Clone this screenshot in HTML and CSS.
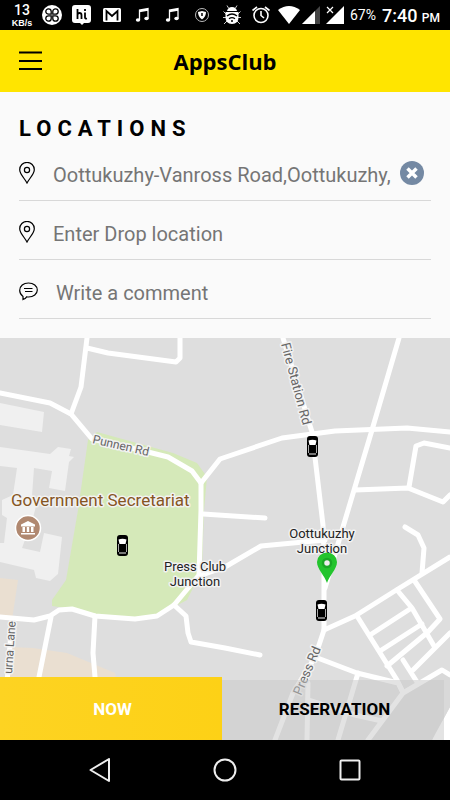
FILE: index.html
```html
<!DOCTYPE html>
<html lang="en">
  <head>
    <meta charset="utf-8" />
    <meta name="viewport" content="width=device-width, initial-scale=1.0" />
    <title>AppsClub</title>
    <link rel="stylesheet" href="styles.css">
  </head>
  <body>
    <!-- Status bar -->
    <div class="status">
      <div class="status-group notices">
        <div class="speed"><span class="speed-value">13</span><span class="speed-unit">KB/s</span></div>
        <svg class="ico" viewBox="0 0 20 20">
          <circle cx="10" cy="10" r="10" fill="#fff"/>
          <path d="M9.200 9.200H6.500a2.700 2.700 0 1 1 2.700-2.700zM10.800 9.200V6.500a2.700 2.700 0 1 1 2.700 2.700zM9.200 10.800v2.700a2.700 2.700 0 1 1-2.700-2.700zM10.800 10.800h2.700a2.700 2.700 0 1 1-2.700 2.700z" fill="#fff" stroke="#000" stroke-width="1.300"/>
        </svg>
        <svg class="ico" viewBox="0 0 20 20">
          <path d="M3 0h13q3 0 3 3v12q0 3-3 3h-4l-2 2-2-2H3q-3 0-3-3V3q0-3 3-3z" fill="#fff"/>
          <path d="M5.500 4v10M5.500 10q0-2 2-2t2 2v4M13 7.500v5q0 1.500 2 1M13 4v2" fill="none" stroke="#000" stroke-width="1.800"/>
        </svg>
        <svg class="ico" viewBox="0 0 20 20">
          <rect x="1" y="3" width="18" height="14" rx="1.500" fill="#fff"/>
          <path d="M4.500 15.500V6L10 11l5.500-5v9.500" fill="none" stroke="#000" stroke-width="1.800"/>
        </svg>
        <svg class="ico" viewBox="0 0 20 20"><use href="#note"/></svg>
        <svg class="ico" viewBox="0 0 20 20"><use href="#note"/></svg>
        <svg class="ico" viewBox="0 0 20 20">
          <circle cx="10" cy="10" r="6.500" fill="none" stroke="#bbb"/>
          <path d="M10 6l4 1q0 5-4 7.500Q6 12 6 7z" fill="#fff"/>
          <path d="M10 8v3" stroke="#000" stroke-width="1.500"/>
        </svg>
        <svg class="ico" viewBox="0 0 20 20">
          <path d="M5 6Q6 2 10 2t5 4z" fill="#fff"/>
          <path d="M6.500 3L5 .5M13.500 3L15 .5M4 9L1.500 6.500M4 12.500H1M5 16l-3 3M16 9l2.500-2.500M16 12.500h3M15 16l3 3" stroke="#ccc"/>
          <path d="M3.500 7h13v5q0 7-6.500 7t-6.500-7z" fill="#fff"/>
          <path d="M5 11q5-4 10 0M7 13.800q3-2.300 6 0" fill="none" stroke="#000" stroke-width="1.300"/>
          <circle cx="10" cy="16" r="1" />
        </svg>
      </div>
      <div class="status-group signals">
        <svg class="ico ico-cell" viewBox="1 1 18 20">
          <g fill="none" stroke="#fff" stroke-width="1.600">
            <circle cx="10" cy="11.500" r="7"/>
            <path d="M10 7v4.500l3 2.500M1.500 6.500L6 3M18.500 6.500L14 3"/>
          </g>
        </svg>
        <svg class="ico ico-wifi" viewBox="0 0 22 20"><path d="M0 5Q11-3 22 5L11 19z" fill="#fff"/></svg>
        <svg class="ico ico-cell" viewBox="0 0 18 20"><path d="M0 19L18 1v18z" fill="#444"/><path d="M0 19L13 6v13z" fill="#fff"/></svg>
        <svg class="ico ico-cell" viewBox="0 0 18 20"><path d="M0 19L18 1v18z" fill="#fff"/><path d="M1 2l6 6M7 2L1 8" stroke="#fff" stroke-width="1.200"/></svg>
        <span class="battery">67%</span>
        <span class="clock">7:40 <small>PM</small></span>
      </div>
    </div>

    <header class="topbar">
      <button class="menu" type="button" aria-label="Menu">
        <svg width="24" height="20" viewBox="0 0 24 20"><path d="M0 1.500h23M0 10h23M0 18h23" stroke="#000" stroke-width="1.800"/></svg>
      </button>
      <h1>AppsClub</h1>
    </header>

    <form class="locations">
      <h2>LOCATIONS</h2>
      <div class="field">
        <label for="pickup" aria-label="Pickup location"><svg width="16" height="22" viewBox="0 0 16 22"><use href="#pin"/></svg></label>
        <input id="pickup" type="text" value="Oottukuzhy-Vanross Road,Oottukuzhy," />
        <button class="clear" type="button" aria-label="Clear">
          <svg width="24" height="24" viewBox="0 0 24 24"><circle cx="12" cy="12" r="12" fill="#7489a3"/><path d="M7.500 7.500l9 9M16.500 7.500l-9 9" stroke="#fff" stroke-width="3.500"/></svg>
        </button>
      </div>
      <div class="field">
        <label for="drop" aria-label="Drop location"><svg width="16" height="22" viewBox="0 0 16 22"><use href="#pin"/></svg></label>
        <input id="drop" type="text" placeholder="Enter Drop location" />
      </div>
      <div class="field">
        <label for="comment" aria-label="Comment">
          <svg width="19" height="20" viewBox="0 0 19 20">
            <path d="M4 18.500V15.500Q.7 13 .7 9.500C.7 5 4.500 2 9.500 2s8.800 3 8.800 7-3.800 7-8.800 7q-1 0-1.800-.2Q6.500 17.500 4 18.500z" fill="none" stroke="#000" stroke-width="1.200"/>
            <path d="M5 7.500h8.500M6 10.500h7.500" stroke="#000"/>
          </svg>
        </label>
        <input id="comment" type="text" placeholder="Write a comment" />
      </div>
    </form>

    <main class="map">
      <svg class="map-canvas" viewBox="0 0 450 402" preserveAspectRatio="xMidYMin slice">
        <defs>
          <g id="note">
            <path d="M7.500 15V5l8.500-1.500v10M7.500 6.500L16 5" fill="none" stroke="#fff" stroke-width="1.300"/>
            <ellipse cx="6" cy="15" rx="2.200" ry="1.800" fill="#fff"/>
            <ellipse cx="14.500" cy="13.500" rx="2.200" ry="1.800" fill="#fff"/>
          </g>
          <g id="pin" fill="none" stroke="#000" stroke-width="1.200">
            <path d="M8 21C6 17 .7 12 .7 7.700a7.300 7.300 0 0 1 14.600 0C15.300 12 10 17 8 21z"/>
            <circle cx="8" cy="8" r="2.600"/>
          </g>
          <g id="car">
            <rect width="11" height="21" rx="3"/>
            <path d="M1.500 4.500q4-1.500 8 0L8.500 9h-6z" fill="#fff"/>
            <path d="M1.500 9v8M9.500 9v8" stroke="#aaa"/>
            <path d="M2 18h7" fill="none" stroke="#eee"/>
          </g>
        </defs>

        <rect width="450" height="402" fill="#dedede"/>
        <!-- campus, park and buildings -->
        <path d="M0 240l18 2-6 40-12-3zM10 309l23 1 34 5 48 20 20 67H0z" fill="#eadfd1"/>
        <path d="M97 94l76 21 24 10 10 14-3 33-2 60-15 30-30 16-22 3-40-3-23-7-20-3v-6l14-20 12-70 10-70z" fill="#d5e9b9"/>
        <path d="M0 65L44 74 42 94 0 87zM0 109L50 116 58 109 71 111 69 118 74 119 69 124 65 153 49 150 52 133 34 130 32 158 36 168 33 180 22 210 40 214 44 195 62 199 58 236 50 243 36 240 34 232 0 224V205H4L7 180 2 177V162L13 157 17 130 0 128z" fill="#f0f0f0"/>
        <path d="M450 369l-6 11-7 10-5 12h18z" fill="#fff"/>
        <path d="M442 332l-39 23-35 47h64l18-33v-32z" fill="#d9d9d9"/>

        <g class="roads">
          <path d="M0 55L50 65 71 76 92 101 148 114 168 119 192 133 201 145V172L199 237 174 267 157 278 135 281 95 278 72 271 59 272 50 278 34 282 0 279"/>
          <path d="M87 0L81 49 71 76M87 10l21 5 68 9 4-4V0"/>
          <path d="M201 145l19-24 62-21 53-7 72-3 43 4"/>
          <path d="M283 0l29 94 11 93 1 28v77l-9 27-22 36-18 47"/>
          <path d="M399 0L372 92 343 189 325 250M355 152l53-2 35 14 7-7"/>
          <path d="M409 149l7-41 8-3 26 5M203 176l62 4"/>
          <path d="M199 238l26-9 36-21 64-6M405 189l13 8 6 13-2 25"/>
          <path d="M324 292l31-14 43-27 52-32"/>
          <path d="M357 278l40 64 6 12M397 252l15 18 22 38M414 242l26 39-12 13-41 34M370 297l40-26M380 313l42-27M450 295l-37 37M403 322l14 22"/>
          <path d="M315 319l42 16 41 10 5 10-35 47M403 355l39-23 8 5M358 335l-20 67M308 345l-1 57M308 362l47 15 27 6" />
          <path d="M51 279l-12 60M95 278l-2 37 2 24M174 267l12 11 2 17 3 9 34 6 35 7M12 282L7 345"/>
        </g>

        <g class="labels">
          <text class="road short" transform="translate(92 105) rotate(13)">Punnen Rd</text>
          <text class="road" transform="translate(281 6) rotate(75)">Fire Station Rd</text>
          <text class="road" transform="translate(301 358) rotate(-67)">Press Rd</text>
          <text class="road short" transform="translate(12 336) rotate(-86)">urna Lane</text>
          <text class="poi" x="11" y="168">Government Secretariat</text>
          <text x="195" y="233" text-anchor="middle">Press Club</text>
          <text x="195" y="248" text-anchor="middle">Junction</text>
          <text x="322" y="200" text-anchor="middle">Oottukuzhy</text>
          <text x="322" y="215" text-anchor="middle">Junction</text>
        </g>

        <g transform="translate(28 190)">
          <circle r="12.500" fill="#b08870" stroke="#fff" stroke-width="1.500"/>
          <path d="M0-7l7 3.500v2H-7v-2zM-5.500-1h2.500v5h-2.500zM-1.200-1h2.400v5h-2.400zM3-1h2.500v5H3zM-7 5H7v1.500H-7z" fill="#fff"/>
        </g>

        <use href="#car" x="307" y="98"/>
        <use href="#car" x="117" y="197"/>
        <use href="#car" x="316" y="262"/>
        <path d="M327 245c-2-7-10-14-10-21a10 9.500 0 0 1 20 0c0 7-8 14-10 21z" fill="#23c42d"/>
        <circle cx="327" cy="225" r="4" fill="#eee" stroke="#1aa826" stroke-width="2.500"/>
      </svg>
      <div class="actions">
        <button class="now" type="button">NOW</button>
        <button class="reserve" type="button">RESERVATION</button>
      </div>
    </main>

    <nav class="softkeys">
      <button type="button" aria-label="Back"><svg width="24" height="24" viewBox="0 0 24 24"><path d="M21 1v22L2.500 12z"/></svg></button>
      <button type="button" aria-label="Home"><svg width="24" height="24" viewBox="0 0 24 24"><circle cx="12" cy="12" r="10.500"/></svg></button>
      <button type="button" aria-label="Recent apps"><svg width="24" height="24" viewBox="0 0 24 24"><rect x="2.500" y="2.500" width="19" height="19" rx="1"/></svg></button>
    </nav>
  </body>
</html>
```

FILE: styles.css
```css
* {
  box-sizing: border-box;
}

body {
  margin: 0;
  min-height: 100vh;
  display: flex;
  flex-direction: column;
  background-color: #fafafa;
  color: #000;
  font-family: Roboto, "Liberation Sans", sans-serif;
}

button {
  border: 0;
  padding: 0;
  background: none;
  font-family: inherit;
}

svg {
  display: block;
}

/* status bar */
.status {
  height: 30px;
  padding: 0 10px 0 12px;
  display: flex;
  align-items: center;
  justify-content: space-between;
  background-color: #000;
  color: #fff;
}

.status-group {
  display: flex;
  align-items: center;
}

.notices {
  gap: 10px;
}

.signals {
  gap: 6px;
}

.ico {
  width: 20px;
  height: 20px;
  flex: none;
}

.ico-wifi {
  width: 22px;
  margin: 0 -4px 0 2px;
}

.ico-cell {
  width: 18px;
}

.speed {
  width: 20px;
  display: flex;
  flex-direction: column;
  align-items: center;
}

.speed-value {
  font-size: 14px;
  line-height: 16px;
  font-weight: 500;
}

.speed-unit {
  font: bold 9px/10px "Liberation Sans", sans-serif;
}

.battery {
  font-size: 14px;
}

.clock {
  font-size: 18px;
  font-weight: 500;
  white-space: nowrap;
}

.clock small {
  font-size: 12px;
}

/* header */
.topbar {
  height: 62px;
  padding: 0 19px;
  display: grid;
  grid-template-columns: 24px 1fr 24px;
  align-items: center;
  background-color: #ffe500;
}

.topbar h1 {
  margin: 0;
  text-align: center;
  font: 700 22px/30px "Open Sans", "Noto Sans", sans-serif;
}

/* form */
.locations {
  padding: 24px 19px 19px;
}

.locations h2 {
  margin: 0;
  font-size: 22px;
  line-height: 26px;
  font-weight: 700;
  letter-spacing: 6px;
}

.field {
  height: 59px;
  padding-top: 4px;
  display: flex;
  align-items: center;
  border-bottom: 1px solid #d8d8d8;
}

.field input {
  flex: 1;
  min-width: 0;
  margin-left: 18px;
  padding: 4px 0 0;
  border: 0;
  outline: 0;
  background: none;
  color: #757575;
  font: 20px/24px Roboto, "Liberation Sans", sans-serif;
}

.field input::placeholder {
  color: #757575;
  opacity: 1;
}

.clear {
  margin: 0 7px 0 8px;
}

/* map */
.map {
  flex: 1;
  min-height: 240px;
  position: relative;
  display: flex;
  flex-direction: column;
  justify-content: flex-end;
  overflow: hidden;
}

.map-canvas {
  position: absolute;
  top: 0;
  left: 0;
  width: 100%;
  height: 100%;
}

.roads {
  fill: none;
  stroke: #fff;
  stroke-width: 5px;
  stroke-linejoin: round;
  stroke-linecap: round;
}

.labels {
  fill: #222;
  font-size: 13px;
  paint-order: stroke;
  stroke: #f2f2f2;
  stroke-width: 3px;
  stroke-linejoin: round;
}

.labels .road {
  fill: #666;
}

.labels .short {
  font-size: 12px;
}

.labels .poi {
  fill: #855523;
  font-size: 17px;
}

.actions {
  position: relative;
  display: flex;
  align-items: flex-end;
  padding-right: 6px;
}

.actions button {
  flex: 1;
  padding-left: 3px;
  font-size: 17px;
  font-weight: 700;
}

.actions .now {
  height: 63px;
  background: linear-gradient(90deg, #fdd322, #fdd116);
  color: #fff;
}

.actions .reserve {
  height: 60px;
  padding-bottom: 3px;
  background-color: rgba(200, 200, 200, .5);
}

/* android keys */
.softkeys {
  height: 60px;
  padding: 0 38px;
  display: grid;
  grid-template-columns: repeat(3, 1fr);
  background-color: #000;
}

.softkeys button {
  display: flex;
  align-items: center;
  justify-content: center;
}

.softkeys svg {
  fill: none;
  stroke: #eee;
  stroke-width: 2px;
  stroke-linejoin: round;
}
```
